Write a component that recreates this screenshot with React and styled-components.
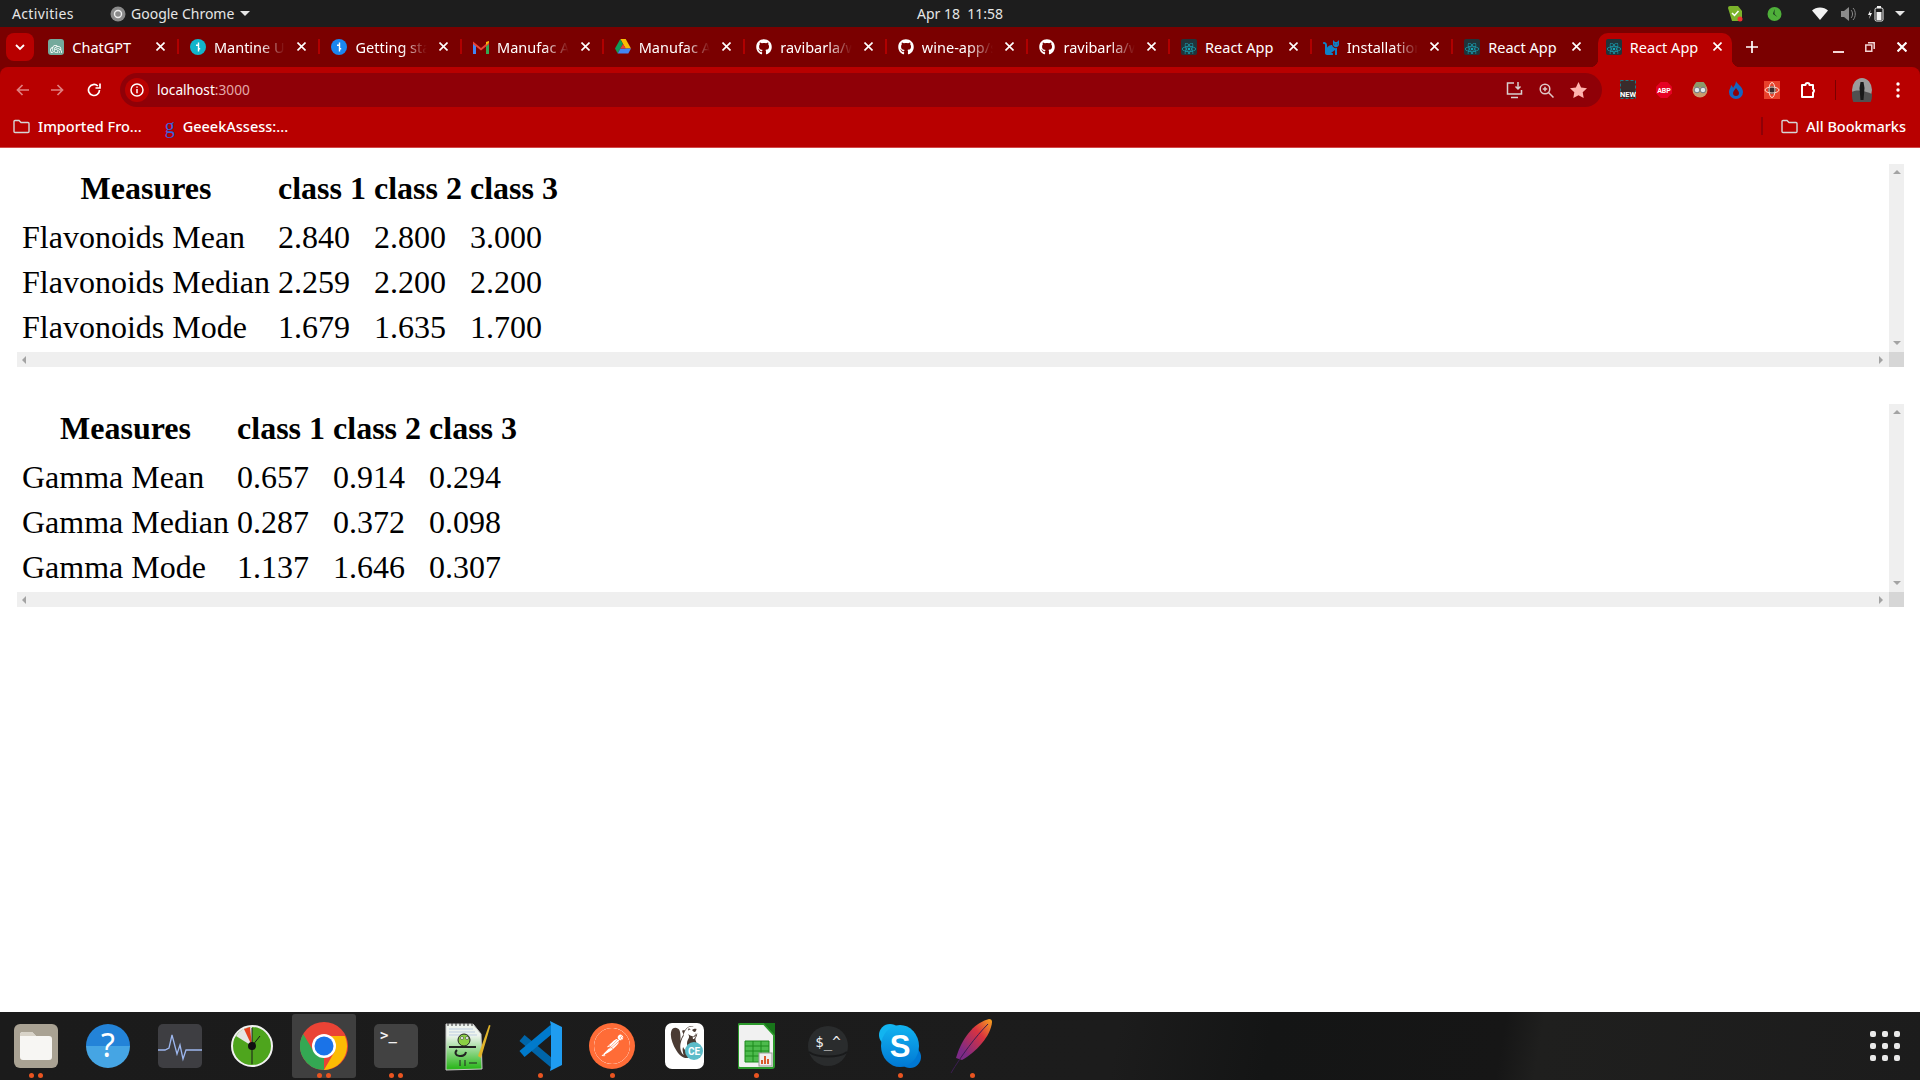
import styled, { createGlobalStyle } from "styled-components";
import { FaGithub, FaReact, FaCat } from "react-icons/fa";
import { SiOpenai, SiPostman, SiDbeaver } from "react-icons/si";

const UI_FONT = `"Noto Sans", "Open Sans", sans-serif`;

const flavonoids = [
    { name: "Flavonoids Mean", values: ["2.840", "2.800", "3.000"] },
    { name: "Flavonoids Median", values: ["2.259", "2.200", "2.200"] },
    { name: "Flavonoids Mode", values: ["1.679", "1.635", "1.700"] },
];

const gamma = [
    { name: "Gamma Mean", values: ["0.657", "0.914", "0.294"] },
    { name: "Gamma Median", values: ["0.287", "0.372", "0.098"] },
    { name: "Gamma Mode", values: ["1.137", "1.646", "0.307"] },
];

const GlobalStyle = createGlobalStyle`
    html, body { margin: 0; padding: 0; height: 100%; background: #fff; overflow: hidden; }
    * { box-sizing: border-box; }
`;

const Page = styled.div`
    display: flex;
    flex-direction: column;
    width: 1920px;
    height: 1080px;
    font-family: ${UI_FONT};
`;

/* ---- gnome top bar ---- */
const TopBar = styled.header`
    position: relative;
    display: flex;
    align-items: center;
    height: 27px;
    padding: 0 12px 0 12px;
    background: #1d1d1d;
    color: #e6e6e6;
    font-size: 14px;
`;
const Activities = styled.span`
    width: 62px;
    margin-right: 36px;
    letter-spacing: 0.35px;
    white-space: nowrap;
`;
const AppMenu = styled.div`
    display: flex;
    align-items: center;
    gap: 5px;
`;
const AppName = styled.span`
    margin-right: 1px;
`;
const Caret = styled.span`
    width: 0;
    height: 0;
    border-left: 5px solid transparent;
    border-right: 5px solid transparent;
    border-top: 5px solid #e6e6e6;
`;
const Clock = styled.div`
    position: absolute;
    left: 917px;
    top: 4px;
    white-space: pre;
`;
const Tray = styled.div`
    display: flex;
    align-items: center;
    margin-left: auto;
`;
const TraySlot = styled.span`
    display: flex;
    justify-content: center;
    width: 16px;
    margin-left: ${(p) => p.$gap}px;
`;

/* ---- chrome tab strip ---- */
const TabStrip = styled.div`
    display: flex;
    align-items: flex-start;
    height: 40px;
    padding: 6px 2px 0 6px;
    background: #7a0000;
`;
const MenuButton = styled.div`
    display: flex;
    align-items: center;
    justify-content: center;
    flex: 0 0 28px;
    height: 28px;
    margin-right: 3.3px;
    border-radius: 8px;
    background: #b80000;
`;
const Tab = styled.div`
    position: relative;
    display: flex;
    align-items: center;
    flex: 0 0 141.6px;
    min-width: 0;
    height: 34px;
    padding: 0 14px 7px 11px;
    color: #fff;
    font-size: 14.5px;
    z-index: 0;

    &::before {
        content: "";
        position: absolute;
        z-index: -1;
        display: ${(p) => (p.$active ? "block" : "none")};
        left: 3px;
        right: 4px;
        top: 0;
        bottom: 0;
        border-radius: 10px 10px 0 0;
        background: #b80000;
    }

    &::after {
        content: "";
        position: absolute;
        right: 0;
        top: 6px;
        width: 2px;
        height: 15px;
        background: ${(p) => (p.$divider ? "#b00000" : "transparent")};
    }
`;
const TabFlare = styled.i`
    position: absolute;
    bottom: 0;
    width: 8px;
    height: 8px;
    ${(p) => (p.$side === "left" ? "left: -5px;" : "right: -4px;")}
    background: radial-gradient(circle at ${(p) => (p.$side === "left" ? "0 0" : "100% 0")}, #7a0000 8px, #b80000 8.5px);
`;
const Favicon = styled.span`
    display: flex;
    align-items: center;
    justify-content: center;
    flex: 0 0 16px;
    height: 16px;
    margin-right: 8px;
`;
const TabTitle = styled.span`
    flex: 1;
    min-width: 0;
    margin-right: 6px;
    overflow: hidden;
    white-space: nowrap;
    mask-image: ${(p) => (p.$fade ? "linear-gradient(to right, #000 60%, transparent 92%)" : "none")};
`;
const TabClose = styled.span`
    display: flex;
    flex: 0 0 9px;
`;
const NewTab = styled.div`
    display: flex;
    align-items: center;
    justify-content: center;
    flex: 0 0 32px;
    height: 28px;
`;
const WindowButtons = styled.div`
    display: flex;
    flex: none;
    margin-left: auto;
`;
const WindowButton = styled.div`
    display: flex;
    align-items: center;
    justify-content: center;
    width: 32px;
    height: 28px;
`;

/* ---- chrome toolbar ---- */
const Toolbar = styled.div`
    display: flex;
    align-items: center;
    height: 40px;
    padding: 6px 4px 0 4px;
    border-radius: 8px 8px 0 0;
    background: #b80000;
`;
const ToolbarEdge = styled.div`
    background: #7a0000;
`;
const ToolSlot = styled.div`
    display: flex;
    align-items: center;
    justify-content: center;
    flex: 0 0 36px;
    height: 34px;
`;
const Omnibox = styled.div`
    display: flex;
    align-items: center;
    flex: 1;
    height: 34px;
    margin: 0 8px;
    padding: 0 8px 0 5px;
    border-radius: 17px;
    background: #8f0007;
`;
const SiteBadge = styled.span`
    display: flex;
    align-items: center;
    justify-content: center;
    width: 24px;
    height: 24px;
    margin-right: 8px;
    border-radius: 50%;
    background: #b80000;
`;
const Url = styled.span`
    color: #fff;
    font-size: 13.7px;
    line-height: 18px;
    margin-top: -1px;
`;
const UrlPort = styled.span`
    color: #e3a9a9;
`;
const OmniActions = styled.div`
    display: flex;
    margin-left: auto;
`;
const OmniSlot = styled.div`
    display: flex;
    align-items: center;
    justify-content: center;
    width: 32px;
    height: 34px;
`;
const ToolDivider = styled.div`
    flex: 0 0 1px;
    height: 20px;
    margin: 0 8px 0 9px;
    background: #7a0000;
`;

/* ---- bookmarks ---- */
const BookmarkBar = styled.div`
    display: flex;
    align-items: center;
    height: 41px;
    padding: 0 14px 2px 13px;
    background: #b80000;
    border-bottom: 1px solid #d24a4a;
    color: #fff;
    font-size: 14.5px;
    font-weight: 500;
`;
const Bookmark = styled.div`
    display: flex;
    align-items: center;
    gap: 8px;
    margin-right: ${(p) => p.$gap || 0}px;
    white-space: nowrap;
`;
const BarDivider = styled.div`
    width: 2px;
    height: 18px;
    margin-left: auto;
    margin-right: 18px;
    background: #8f0007;
`;
const GoogleG = styled.span`
    color: #3b5fd9;
    font-family: "Liberation Serif", serif;
    font-size: 20px;
    line-height: 16px;
`;

/* ---- page content ---- */
const Main = styled.main`
    display: flex;
    flex-direction: column;
    flex: 1;
    gap: 37px;
    padding: 16px 16px 0 17px;
    background: #fff;
`;
const ScrollFrame = styled.section`
    display: grid;
    grid-template-columns: 1fr 15px;
    grid-template-rows: 188px 15px;
`;
const TableArea = styled.div`
    overflow: hidden;
`;
const MeasureTable = styled.table`
    font-family: "Liberation Serif", "Times New Roman", serif;
    font-size: 32px;
    color: #000;
    border-spacing: 2px;
`;
const Head = styled.th`
    padding: 4px 3px 7px;
    font-weight: 700;
    text-align: center;
    white-space: nowrap;
`;
const Cell = styled.td`
    padding: 3px;
    white-space: nowrap;
`;
const VBar = styled.div`
    display: flex;
    flex-direction: column;
    align-items: center;
    justify-content: space-between;
    padding: 6px 0 7px;
    background: #efefef;
`;
const HBar = styled.div`
    display: flex;
    align-items: center;
    justify-content: space-between;
    padding: 0 6px 0 5px;
    background: #efefef;
`;
const BarCorner = styled.div`
    background: #d6d6d6;
`;
const Arrow = styled.span`
    width: 0;
    height: 0;
    ${(p) => ({
        up: "border-left: 4px solid transparent; border-right: 4px solid transparent; border-bottom: 4px solid #a3a3a3;",
        down: "border-left: 4px solid transparent; border-right: 4px solid transparent; border-top: 4px solid #a3a3a3;",
        left: "border-top: 4px solid transparent; border-bottom: 4px solid transparent; border-right: 4px solid #a3a3a3;",
        right: "border-top: 4px solid transparent; border-bottom: 4px solid transparent; border-left: 4px solid #a3a3a3;",
    }[p.$dir])}
`;

/* ---- dock ---- */
const Dock = styled.footer`
    display: flex;
    align-items: stretch;
    height: 68px;
    padding: 0 9px 0 0;
    background:
        linear-gradient(100deg, #1b1b1b 0, #1c1c1c 58%, #141515 66%, #161616 78%, #1f1f1e 80%, #1c1c1c 100%);
`;
const DockItem = styled.div`
    position: relative;
    display: flex;
    align-items: center;
    justify-content: center;
    flex: 0 0 72px;
    height: 68px;

    &::before {
        content: "";
        position: absolute;
        display: ${(p) => (p.$focused ? "block" : "none")};
        left: 4px;
        right: 4px;
        top: 2px;
        bottom: 2px;
        border-radius: 3px;
        background: #3f3f3f;
    }

    svg { position: relative; }
`;
const RunDots = styled.div`
    position: absolute;
    left: 0;
    right: 0;
    bottom: 2px;
    display: flex;
    justify-content: center;
    gap: 4px;
`;
const RunDot = styled.span`
    width: 5px;
    height: 5px;
    border-radius: 50%;
    background: #e95420;
`;
const AppGrid = styled.div`
    display: grid;
    grid-template-columns: repeat(3, 6px);
    grid-auto-rows: 6px;
    gap: 6px;
    align-self: center;
    margin-left: auto;
    margin-right: 11px;
`;
const GridDot = styled.span`
    border-radius: 2px;
    background: #e9e9e9;
`;

/* ---- icons ---- */
function ChatIcon() {
    return (
        <svg width="16" height="16" viewBox="0 0 16 16">
            <rect width="16" height="16" rx="3" fill="#74aa9c" />
            <foreignObject x="2" y="2" width="12" height="12"><SiOpenai size={12} color="#fff" /></foreignObject>
        </svg>
    );
}

function Dotted({ color }) {
    return (
        <svg width="16" height="16" viewBox="0 0 16 16">
            <circle cx="8" cy="8" r="8" fill={color} />
            <path d="M8.500 3.500v9M6 6.200h2M8 9.800h2.200" stroke="#fff" strokeWidth="1.400" fill="none" />
        </svg>
    );
}

function GmailIcon() {
    return (
        <svg width="16" height="14" viewBox="0 0 16 14">
            <path d="M0 3v11h3V5z" fill="#4285f4" />
            <path d="M13 5v9h3V3z" fill="#34a853" />
            <path d="M0 1.500 8 8l8-6.500V4L8 10.500 0 4z" fill="#ea4335" />
            <path d="M13 5l3-2.500V1l-3 1z" fill="#fbbc04" />
        </svg>
    );
}

function DriveIcon() {
    return (
        <svg width="16" height="15" viewBox="0 0 16 15">
            <path d="M5.300 0h5.400l5.300 9.500h-5.400z" fill="#fbbc04" />
            <path d="M5.300 0 0 9.500l2.700 5L8 5z" fill="#0f9d58" />
            <path d="M2.700 14.500h10.600l2.700-5H5.400z" fill="#4285f4" />
            <path d="M8 5l2.700 4.500H5.400z" fill="#ea4335" />
        </svg>
    );
}

function ReactFav() {
    return (
        <svg width="16" height="16" viewBox="0 0 16 16">
            <rect width="16" height="16" rx="2" fill="#20343a" />
            <foreignObject x="1" y="1" width="14" height="14"><FaReact size={14} color="#18a5b8" /></foreignObject>
        </svg>
    );
}

function Folder({ color = "#d6d6d6" }) {
    return (
        <svg width="17" height="15" viewBox="0 0 17 15" fill="none" stroke={color} strokeWidth="1.400">
            <path d="M1 2.500a1 1 0 0 1 1-1h4l2 2h7a1 1 0 0 1 1 1v8a1 1 0 0 1-1 1H2a1 1 0 0 1-1-1z" />
        </svg>
    );
}

function NavArrow({ dir, color }) {
    const d = dir === "back" ? "M14 7H3M7.500 2 2.500 7l5 5" : "M0 7h11M6.500 2l5 5-5 5";
    return (
        <svg width="14" height="14" viewBox="0 0 14 14" fill="none" stroke={color} strokeWidth="1.700"><path d={d} /></svg>
    );
}

function ExtensionNew() {
    return (
        <svg width="16" height="20" viewBox="0 0 16 20">
            <rect x="0.500" y="0.500" width="15" height="18" fill="#3a2a2a" stroke="#1b7a86" strokeDasharray="3 2" />
            <text x="8" y="16.500" fontSize="7.500" fontWeight="700" textAnchor="middle" fill="#fff" fontFamily="Roboto, sans-serif">NEW</text>
        </svg>
    );
}

function ExtensionAbp() {
    return (
        <svg width="16" height="16" viewBox="0 0 16 16">
            <path d="M4.700 0h6.600L16 4.700v6.600L11.300 16H4.700L0 11.300V4.700z" fill="#e60023" />
            <text x="8" y="10.800" fontSize="7" fontWeight="700" textAnchor="middle" fill="#fff" fontFamily="Roboto, sans-serif">ABP</text>
        </svg>
    );
}

function ExtensionFace() {
    return (
        <svg width="16" height="16" viewBox="0 0 16 16">
            <circle cx="8" cy="8" r="7.500" fill="#c89a6e" />
            <path d="M2 5a6 6 0 0 1 12 0z" fill="#8c9a6b" />
            <circle cx="5" cy="8" r="2.800" fill="#dfe7ea" stroke="#567" strokeWidth=".8" />
            <circle cx="11" cy="8" r="2.800" fill="#dfe7ea" stroke="#567" strokeWidth=".8" />
        </svg>
    );
}

function ExtensionFlame() {
    return (
        <svg width="16" height="18" viewBox="0 0 16 18">
            <path d="M8 0c1 3 7 6 7 11a7 7 0 0 1-14 0c0-3 2-4 2-7 1 1 2 2 2 3 1-2 3-4 3-7z" fill="#1565c0" />
            <path d="M8 7c1 2 3 3 3 5a3 3 0 0 1-6 0c0-2 2-3 3-5z" fill="#8f0007" />
        </svg>
    );
}

function ExtensionBug() {
    return (
        <svg width="16" height="18" viewBox="0 0 16 18">
            <rect width="16" height="18" fill="#e8412b" />
            <circle cx="8" cy="9" r="4" fill="#3a2a2a" />
            <g fill="none" stroke="#ffd9cc" strokeWidth="1">
                <ellipse cx="8" cy="9" rx="7" ry="3" />
                <ellipse cx="8" cy="9" rx="3" ry="7.500" />
            </g>
        </svg>
    );
}

function Puzzle() {
    return (
        <svg width="17" height="18" viewBox="0 0 17 18" fill="none" stroke="#fff" strokeWidth="2" strokeLinejoin="round">
            <path d="M2 4h3.500a2 2 0 0 1 4 0H13v4a2 2 0 0 1 0 3.500V16H2z" />
        </svg>
    );
}

function Avatar() {
    return (
        <svg width="20" height="24" viewBox="0 0 20 24">
            <ellipse cx="10" cy="12" rx="10" ry="12" fill="#9c9c9c" />
            <path d="M0 14c6-3 12-1 20 2v2a10 12 0 0 1-20 0z" fill="#505050" />
            <path d="M8.500 4h3l1 6-1 12h-3l-1-12z" fill="#1a1a1a" />
        </svg>
    );
}

function FilesApp() {
    return (
        <svg width="44" height="46" viewBox="0 0 44 46">
            <rect y="1" width="44" height="44" rx="6" fill="#a9a293" />
            <path d="M6 12a3 3 0 0 1 3-3h9l4 4h13a3 3 0 0 1 3 3v18a3 3 0 0 1-3 3H9a3 3 0 0 1-3-3z" fill="#f7f6f3" />
            <path d="M6 12a3 3 0 0 1 3-3h9l4 4H6z" fill="#d8d3c8" />
        </svg>
    );
}

function HelpApp() {
    return (
        <svg width="44" height="46" viewBox="0 0 44 46">
            <defs>
                <linearGradient id="help" x1="0" y1="0" x2="0" y2="1">
                    <stop offset="0.500" stopColor="#2383d8" />
                    <stop offset="0.500" stopColor="#45a5e4" />
                </linearGradient>
            </defs>
            <ellipse cx="22" cy="23" rx="22" ry="22" fill="url(#help)" />
            <text x="22" y="34" fontSize="32" textAnchor="middle" fill="#fff" fontFamily="Noto Sans, sans-serif">?</text>
        </svg>
    );
}

function MonitorApp() {
    return (
        <svg width="44" height="44" viewBox="0 0 44 44">
            <rect width="44" height="44" rx="5" fill="#3e3e42" />
            <path d="M0 26h7l4-2 3-13 5 19 3-9 3 14 3-9h16" fill="none" stroke="#9db7ee" strokeWidth="1.300" />
        </svg>
    );
}

function ClockApp() {
    return (
        <svg width="42" height="42" viewBox="0 0 42 42">
            <circle cx="21" cy="21" r="20" fill="#4ea51d" stroke="#f2f2f2" strokeWidth="2" />
            <path d="M21 21 5 11a19 19 0 0 1 16-9z" fill="#e5e5e5" />
            <path d="M21 21 13 4l6-2z" fill="#e4411f" />
            <path d="M21 3v36M21 21l8-10" stroke="#1a1a1a" strokeWidth="1" />
            <circle cx="21" cy="21" r="4" fill="#111" />
        </svg>
    );
}

function ChromeApp() {
    return (
        <svg width="48" height="48" viewBox="0 0 48 48">
            <circle cx="24" cy="24" r="24" fill="#ea4335" />
            <path d="M24 48a24 24 0 0 1-20.800-36L14 30l10 6z" fill="#34a853" />
            <path d="M24 14h20.800A24 24 0 0 1 24 48l10.400-18z" fill="#fbbc04" />
            <circle cx="24" cy="24" r="12" fill="#fff" />
            <circle cx="24" cy="24" r="9.500" fill="#1a73e8" />
        </svg>
    );
}

function TerminalApp() {
    return (
        <svg width="44" height="44" viewBox="0 0 44 44">
            <rect width="44" height="44" rx="5" fill="#424242" />
            <text x="6" y="16" fontSize="14" fontWeight="700" fill="#f2f2f2" fontFamily="DejaVu Sans Mono, monospace">&gt;_</text>
        </svg>
    );
}

function NotepadApp() {
    return (
        <svg width="46" height="52" viewBox="0 0 46 52">
            <defs>
                <linearGradient id="pad" x1="0" y1="0" x2="0" y2="1">
                    <stop offset="0.250" stopColor="#eef4ee" />
                    <stop offset="0.950" stopColor="#2fb820" />
                </linearGradient>
            </defs>
            <path d="M1 4h27l8 10 1 35-36 1z" fill="url(#pad)" stroke="#c9c9c9" />
            <path d="M3 3v3M7 3v3M11 3v3M15 3v3M19 3v3M23 3v3M27 3v3" stroke="#333" />
            <path d="M4 9h24M4 12h26M4 15h28" stroke="#a8bcd8" strokeWidth=".7" />
            <circle cx="19" cy="20" r="6" fill="#8bd044" stroke="#222" />
            <circle cx="17" cy="18" r="1.500" fill="#fff" stroke="#222" strokeWidth=".5" />
            <circle cx="22" cy="18" r="1.500" fill="#fff" stroke="#222" strokeWidth=".5" />
            <path d="M4 27h27" stroke="#222" strokeWidth="2" />
            <path d="M12 30c-6 6 8 9 9 2" stroke="#222" strokeWidth="2" fill="none" />
            <path d="M15 40v6M20 40v6M24 43h8" stroke="#222" />
            <path d="M33 36 44 5l1.500 .5L36 38z" fill="#e2b52a" />
        </svg>
    );
}

function VscodeApp() {
    return (
        <svg width="44" height="50" viewBox="0 0 44 50">
            <path d="M4 17 35 43" stroke="#0065a9" strokeWidth="8" fill="none" />
            <path d="M4 33 35 7" stroke="#007acc" strokeWidth="8" fill="none" />
            <path d="M32 0l12 6v38l-12 6 1-5V5z" fill="#1f9cf0" />
        </svg>
    );
}

function PostmanApp() {
    return (
        <svg width="46" height="46" viewBox="0 0 46 46">
            <circle cx="23" cy="23" r="23" fill="#ff6c37" />
            <foreignObject x="5" y="5" width="36" height="36">
                <SiPostman size={36} color="#ff6c37" style={{ background: "#fff", borderRadius: "50%" }} />
            </foreignObject>
        </svg>
    );
}

function BeaverApp() {
    return (
        <svg width="39" height="48" viewBox="0 0 39 48">
            <rect y="1" width="39" height="46" rx="7" fill="#fff" />
            <foreignObject x="3" y="4" width="32" height="38"><SiDbeaver size={32} color="#4a3b33" /></foreignObject>
            <circle cx="29" cy="29" r="9" fill="#5cbcc9" />
            <text x="29" y="33" fontSize="10" fontWeight="700" textAnchor="middle" fill="#fff" fontFamily="Roboto, sans-serif">CE</text>
        </svg>
    );
}

function CalcApp() {
    return (
        <svg width="37" height="46" viewBox="0 0 37 46">
            <path d="M2 1h24l10 11v31a2 2 0 0 1-2 2H2a2 2 0 0 1-2-2V3a2 2 0 0 1 2-2z" fill="#f1f1f1" stroke="#2c9a2c" strokeWidth="2" />
            <path d="M26 0h11v12z" fill="#18761a" />
            <path d="M7 18h24v21H7z" fill="#4dbb4d" stroke="#1c8a1c" />
            <path d="M7 23h24M7 28h24M7 33h24M15 18v21M23 18v21" stroke="#1c8a1c" />
            <rect x="21" y="30" width="13" height="13" fill="#eee" stroke="#999" />
            <path d="M24 41v-4M27 41v-8M30 41v-5" stroke="#d95b2b" strokeWidth="2" />
        </svg>
    );
}

function ShellApp() {
    return (
        <svg width="40" height="40" viewBox="0 0 40 40">
            <circle cx="20" cy="20" r="20" fill="#2a2c2d" />
            <path d="M1 26c8 6 30 6 38 0" stroke="#191a1b" strokeWidth="2" fill="none" />
            <text x="20" y="21" fontSize="14" textAnchor="middle" fill="#f2f2f2" fontFamily="DejaVu Sans Mono, monospace">$_^</text>
        </svg>
    );
}

function SkypeApp() {
    return (
        <svg width="42" height="44" viewBox="0 0 42 44">
            <defs>
                <linearGradient id="skype" x1="0" y1="0" x2="0" y2="1">
                    <stop offset="0" stopColor="#12b4f0" />
                    <stop offset="1" stopColor="#0078d4" />
                </linearGradient>
            </defs>
            <circle cx="11" cy="11" r="11" fill="#12b4f0" />
            <circle cx="31" cy="33" r="11" fill="#0078d4" />
            <ellipse cx="21" cy="22" rx="19" ry="21" fill="url(#skype)" />
            <text x="21" y="33" fontSize="31" fontWeight="700" textAnchor="middle" fill="#fff" fontFamily="Liberation Sans, sans-serif">S</text>
        </svg>
    );
}

function ApacheApp() {
    return (
        <svg width="44" height="56" viewBox="0 0 44 56">
            <defs>
                <linearGradient id="feather" x1="1" y1="0" x2="0" y2="1">
                    <stop offset="0" stopColor="#f8a51d" />
                    <stop offset="0.350" stopColor="#d9333f" />
                    <stop offset="0.800" stopColor="#7d2a86" />
                </linearGradient>
            </defs>
            <path d="M39 1c-12 3-26 15-33 39l6 2C26 34 41 18 42 4c0-2-1-3-3-3z" fill="url(#feather)" />
            <path d="M38 6C26 18 11 38 1 55" stroke="#3b1d52" strokeWidth="1" fill="none" />
        </svg>
    );
}

const tabs = [
    { title: "ChatGPT", icon: <ChatIcon /> },
    { title: "Mantine UI", icon: <Dotted color="#12b5cb" />, fade: true },
    { title: "Getting started", icon: <Dotted color="#1b86f0" />, fade: true },
    { title: "Manufac Analytics", icon: <GmailIcon />, fade: true },
    { title: "Manufac Analytics", icon: <DriveIcon />, fade: true },
    { title: "ravibarla/wine", icon: <FaGithub size={16} color="#fff" />, fade: true },
    { title: "wine-app/src", icon: <FaGithub size={16} color="#fff" />, fade: true },
    { title: "ravibarla/wine", icon: <FaGithub size={16} color="#fff" />, fade: true },
    { title: "React App", icon: <ReactFav /> },
    { title: "Installation", icon: <FaCat size={16} color="#0f81c7" />, fade: true },
    { title: "React App", icon: <ReactFav /> },
    { title: "React App", icon: <ReactFav />, active: true },
];

const dockApps = [
    { icon: <FilesApp />, dots: 2 },
    { icon: <HelpApp />, dots: 0 },
    { icon: <MonitorApp />, dots: 0 },
    { icon: <ClockApp />, dots: 0 },
    { icon: <ChromeApp />, dots: 2, focused: true },
    { icon: <TerminalApp />, dots: 2 },
    { icon: <NotepadApp />, dots: 0 },
    { icon: <VscodeApp />, dots: 1 },
    { icon: <PostmanApp />, dots: 1 },
    { icon: <BeaverApp />, dots: 0 },
    { icon: <CalcApp />, dots: 1 },
    { icon: <ShellApp />, dots: 0 },
    { icon: <SkypeApp />, dots: 1 },
    { icon: <ApacheApp />, dots: 1 },
];

function CloseX({ size = 9, width = 1.6 }) {
    return (
        <svg width={size} height={size} viewBox="0 0 9 9" stroke="#fff" strokeWidth={width}>
            <path d="M.5.5l8 8M8.500.5l-8 8" />
        </svg>
    );
}

function Measures({ rows }) {
    return (
        <ScrollFrame>
            <TableArea>
                <MeasureTable>
                    <thead>
                        <tr>
                            <Head>Measures</Head>
                            <Head>class 1</Head>
                            <Head>class 2</Head>
                            <Head>class 3</Head>
                        </tr>
                    </thead>
                    <tbody>
                        {rows.map((row) => (
                            <tr key={row.name}>
                                <Cell>{row.name}</Cell>
                                {row.values.map((value, index) => (
                                    <Cell key={index}>{value}</Cell>
                                ))}
                            </tr>
                        ))}
                    </tbody>
                </MeasureTable>
            </TableArea>
            <VBar>
                <Arrow $dir="up" />
                <Arrow $dir="down" />
            </VBar>
            <HBar>
                <Arrow $dir="left" />
                <Arrow $dir="right" />
            </HBar>
            <BarCorner />
        </ScrollFrame>
    );
}

export default function App() {
    return (
        <Page>
            <GlobalStyle />
            <TopBar>
                <Activities>Activities</Activities>
                <AppMenu>
                    <svg width="16" height="16" viewBox="0 0 16 16">
                        <circle cx="8" cy="8" r="7.500" fill="#8a8a8a" />
                        <circle cx="8" cy="8" r="3.500" fill="none" stroke="#eee" strokeWidth="1.400" />
                    </svg>
                    <AppName>Google Chrome</AppName>
                    <Caret />
                </AppMenu>
                <Clock>Apr 18  11:58</Clock>
                <Tray>
                    <TraySlot $gap={0}>
                        <svg width="16" height="17" viewBox="0 0 16 17">
                            <path d="M1 3a2 2 0 0 1 2-2h8l4 5v8a2 2 0 0 1-2 2H5z" fill="#7cb32b" />
                            <path d="M5 8l2.500 2.500L11.500 6" stroke="#fff" strokeWidth="1.500" fill="none" />
                            <circle cx="13" cy="14" r="2.500" fill="#e33" />
                        </svg>
                    </TraySlot>
                    <TraySlot $gap={23}>
                        <svg width="15" height="16" viewBox="0 0 15 16">
                            <circle cx="7.500" cy="8" r="7" fill="#4fb03a" />
                            <path d="M7.500 3v5l3 3L6 8z" fill="#16321a" />
                        </svg>
                    </TraySlot>
                    <TraySlot $gap={30}>
                        <svg width="16" height="13" viewBox="0 0 16 13">
                            <path d="M0 3.500C4-.5 12-.5 16 3.500L8 13z" fill="#f2f2f2" />
                        </svg>
                    </TraySlot>
                    <TraySlot $gap={12}>
                        <svg width="15" height="14" viewBox="0 0 15 14" fill="#8a8a8a">
                            <path d="M0 4h3l5-4v14l-5-4H0z" />
                            <path d="M10 3c2 2 2 6 0 8M12 1c3 3 3 9 0 12" stroke="#8a8a8a" fill="none" />
                        </svg>
                    </TraySlot>
                    <TraySlot $gap={12}>
                        <svg width="16" height="16" viewBox="0 0 16 16">
                            <path d="M2.500 4 0 9h2l-1 4 3-6H2z" fill="#f2f2f2" />
                            <rect x="7" y="2" width="8" height="13" rx="1.500" fill="none" stroke="#f2f2f2" />
                            <rect x="9" y="0" width="4" height="2" fill="#f2f2f2" />
                            <rect x="8.500" y="6" width="5" height="8" fill="#f2f2f2" />
                        </svg>
                    </TraySlot>
                    <TraySlot $gap={8}>
                        <Caret />
                    </TraySlot>
                </Tray>
            </TopBar>

            <TabStrip>
                <MenuButton>
                    <svg width="10" height="7" viewBox="0 0 10 7" fill="none" stroke="#fff" strokeWidth="1.800">
                        <path d="M1 1l4 4 4-4" />
                    </svg>
                </MenuButton>
                {tabs.map((tab, index) => (
                    <Tab key={index} $active={tab.active} $divider={!tab.active && index !== 10}>
                        {tab.active && <TabFlare $side="left" />}
                        {tab.active && <TabFlare $side="right" />}
                        <Favicon>{tab.icon}</Favicon>
                        <TabTitle $fade={tab.fade}>{tab.title}</TabTitle>
                        <TabClose><CloseX /></TabClose>
                    </Tab>
                ))}
                <NewTab>
                    <svg width="12" height="12" viewBox="0 0 12 12" stroke="#fff" strokeWidth="1.700">
                        <path d="M6 0v12M0 6h12" />
                    </svg>
                </NewTab>
                <WindowButtons>
                    <WindowButton>
                        <svg width="11" height="11" viewBox="0 0 11 11" fill="#f3d6d6"><rect y="9" width="11" height="2" /></svg>
                    </WindowButton>
                    <WindowButton>
                        <svg width="10" height="10" viewBox="0 0 10 10" fill="none" stroke="#f3d6d6" strokeWidth="1.500">
                            <path d="M3 .8h6.200V7M.8 3h6v6.200h-6z" />
                        </svg>
                    </WindowButton>
                    <WindowButton>
                        <CloseX size={10} width={1.9} />
                    </WindowButton>
                </WindowButtons>
            </TabStrip>

            <ToolbarEdge>
                <Toolbar>
                    <ToolSlot><NavArrow dir="back" color="#e08080" /></ToolSlot>
                    <ToolSlot><NavArrow dir="forward" color="#e08080" /></ToolSlot>
                    <ToolSlot>
                        <svg width="14" height="14" viewBox="0 0 14 14" fill="none" stroke="#fff" strokeWidth="1.700">
                            <path d="M12.500 7A5.500 5.500 0 1 1 10.800 3" />
                            <path d="M13 .5V5H8.500" />
                        </svg>
                    </ToolSlot>
                    <Omnibox>
                        <SiteBadge>
                            <svg width="14" height="14" viewBox="0 0 14 14">
                                <circle cx="7" cy="7" r="6" fill="none" stroke="#fff" strokeWidth="1.500" />
                                <path d="M7 6v4.200M7 3.500v1.300" stroke="#fff" strokeWidth="1.500" />
                            </svg>
                        </SiteBadge>
                        <Url>localhost<UrlPort>:3000</UrlPort></Url>
                        <OmniActions>
                            <OmniSlot>
                                <svg width="17" height="18" viewBox="0 0 17 18" fill="none" stroke="#d8d0d0" strokeWidth="1.500">
                                    <path d="M8 2H1.500v11h14V9M5 16.500h7" />
                                    <path d="M12 1v7M9.500 5.500 12 8l2.500-2.500" />
                                </svg>
                            </OmniSlot>
                            <OmniSlot>
                                <svg width="15" height="15" viewBox="0 0 15 15" fill="none" stroke="#e0c8c8" strokeWidth="1.500">
                                    <circle cx="6" cy="6" r="4.800" />
                                    <path d="M9.500 9.500 14.500 14.500M3.800 6h4.400M6 3.800v4.400" />
                                </svg>
                            </OmniSlot>
                            <OmniSlot>
                                <svg width="17" height="16" viewBox="0 0 17 16" fill="#ffb3ae">
                                    <path d="M8.500 0l2.600 5.400 5.900.8-4.300 4.100 1 5.700-5.200-2.800L3.300 16l1-5.700L0 6.200l5.900-.8z" />
                                </svg>
                            </OmniSlot>
                        </OmniActions>
                    </Omnibox>
                    <ToolSlot><ExtensionNew /></ToolSlot>
                    <ToolSlot><ExtensionAbp /></ToolSlot>
                    <ToolSlot><ExtensionFace /></ToolSlot>
                    <ToolSlot><ExtensionFlame /></ToolSlot>
                    <ToolSlot><ExtensionBug /></ToolSlot>
                    <ToolSlot><Puzzle /></ToolSlot>
                    <ToolDivider />
                    <ToolSlot><Avatar /></ToolSlot>
                    <ToolSlot>
                        <svg width="4" height="16" viewBox="0 0 4 16" fill="#fff">
                            <circle cx="2" cy="2" r="1.700" />
                            <circle cx="2" cy="8" r="1.700" />
                            <circle cx="2" cy="14" r="1.700" />
                        </svg>
                    </ToolSlot>
                </Toolbar>
            </ToolbarEdge>

            <BookmarkBar>
                <Bookmark $gap={23}><Folder />Imported Fro...</Bookmark>
                <Bookmark><GoogleG>g</GoogleG>GeeekAssess:...</Bookmark>
                <BarDivider />
                <Bookmark><Folder />All Bookmarks</Bookmark>
            </BookmarkBar>

            <Main>
                <Measures rows={flavonoids} />
                <Measures rows={gamma} />
            </Main>

            <Dock>
                {dockApps.map((app, index) => (
                    <DockItem key={index} $focused={app.focused}>
                        {app.icon}
                        {app.dots > 0 && (
                            <RunDots>
                                {Array.from({ length: app.dots }).map((_, i) => <RunDot key={i} />)}
                            </RunDots>
                        )}
                    </DockItem>
                ))}
                <AppGrid>
                    {Array.from({ length: 9 }).map((_, i) => <GridDot key={i} />)}
                </AppGrid>
            </Dock>
        </Page>
    );
}
